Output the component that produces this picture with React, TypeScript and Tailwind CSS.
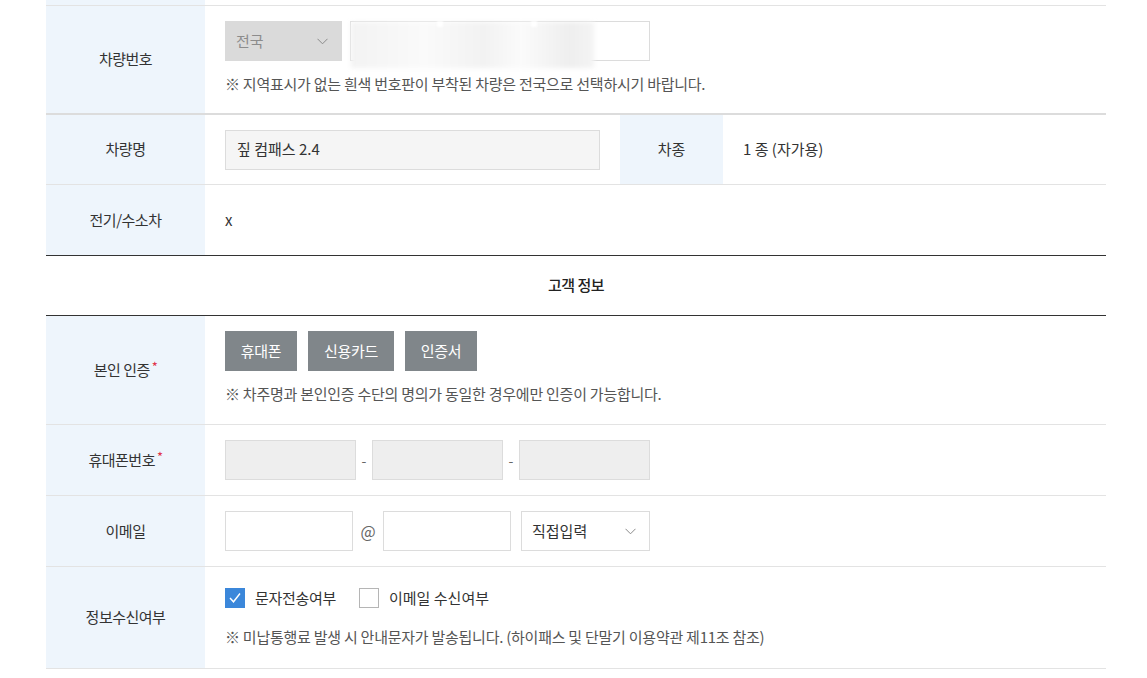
import React from "react";

const font = { fontFamily: '"Noto Sans CJK KR", "Noto Sans", sans-serif' };

function Chevron({ className = "" }: { className?: string }) {
  return (
    <svg width="11" height="7" viewBox="0 0 11 7" className={className}>
      <polyline points="0.5,0.8 5.5,5.8 10.5,0.8" fill="none" stroke="#8a8a8a" strokeWidth="1" />
    </svg>
  );
}

function Label({ children, req = false }: { children: React.ReactNode; req?: boolean }) {
  return (
    <div className="w-[159px] shrink-0 bg-[#eef5fc] flex items-center justify-center text-[15px] text-[#333] tracking-[-0.5px]">
      <span>{children}</span>
      {req && <span className="text-[#e0344a] text-[13px] ml-[2px] -mt-[6px]">*</span>}
    </div>
  );
}

function Note({ children, className = "" }: { children: React.ReactNode; className?: string }) {
  return <div className={"text-[15px] leading-[20px] text-[#555] tracking-[-0.25px] " + className}>{children}</div>;
}

export default function App() {
  return (
    <div className="w-[1147px] h-[678px] bg-white overflow-hidden" style={font}>
      <div className="ml-[46px] w-[1060px]">
        {/* partial row above */}
        <div className="flex h-[6px] border-b border-[#e3e3e3]">
          <div className="w-[159px] bg-[#eef5fc]" />
        </div>

        {/* 차량번호 */}
        <div className="flex h-[109px] border-b-2 border-[#dcdcdc]">
          <Label>차량번호</Label>
          <div className="pl-[20px] pt-[15px]">
            <div className="flex gap-[8px]">
              <div className="w-[117px] h-[40px] bg-[#dadada] flex items-center justify-between pl-[11px] pr-[14px] text-[15px] text-[#8c8c8c]">
                <span>전국</span>
                <Chevron />
              </div>
              <div className="relative w-[300px] h-[40px] border border-[#dcdcdc] bg-white">
                <div className="absolute left-0 top-0 w-[243px] h-[46px] bg-[linear-gradient(90deg,#f3f3f3_0%,#fafafa_30%,#f2f2f2_55%,#fbfbfb_70%,#eeeeee_90%,#f4f4f4_100%)] blur-[2px]" />
                <div className="absolute left-[86px] -top-[1px] w-[6px] h-[6px] bg-white blur-[1px]" />
                <div className="absolute left-[180px] -top-[1px] w-[6px] h-[6px] bg-white blur-[1px]" />
              </div>
            </div>
            <Note className="mt-[13px]">※ 지역표시가 없는 흰색 번호판이 부착된 차량은 전국으로 선택하시기 바랍니다.</Note>
          </div>
        </div>

        {/* 차량명 */}
        <div className="flex h-[70px] border-b border-[#e3e3e3]">
          <Label>차량명</Label>
          <div className="pl-[20px] flex items-center">
            <div className="w-[375px] h-[40px] bg-[#f5f5f5] border border-[#dcdcdc] flex items-center pl-[11px] text-[15px] text-[#333]">
              짚 컴패스 2.4
            </div>
          </div>
          <div className="ml-[20px] w-[103px] bg-[#eef5fc] flex items-center justify-center text-[15px] text-[#333]">차종</div>
          <div className="pl-[20px] flex items-center text-[15px] text-[#333]">1 종 (자가용)</div>
        </div>

        {/* 전기/수소차 */}
        <div className="flex h-[71px] border-b border-[#333]">
          <Label>전기/수소차</Label>
          <div className="pl-[20px] flex items-center text-[15px] text-[#333]">x</div>
        </div>

        {/* 고객 정보 title */}
        <div className="h-[60px] border-b border-[#333] flex items-center justify-center text-[15px] font-medium text-[#222] tracking-[-0.5px]">
          고객 정보
        </div>

        {/* 본인 인증 */}
        <div className="flex h-[109px] border-b border-[#e3e3e3]">
          <Label req>본인 인증</Label>
          <div className="pl-[20px] pt-[15px]">
            <div className="flex gap-[11px]">
              {["휴대폰", "신용카드", "인증서"].map((t, i) => (
                <div
                  key={t}
                  className={
                    "h-[40px] bg-[#80868a] text-white text-[15px] flex items-center justify-center tracking-[-0.3px] " +
                    (i === 1 ? "w-[86px]" : "w-[72px]")
                  }
                >
                  {t}
                </div>
              ))}
            </div>
            <Note className="mt-[13px]">※ 차주명과 본인인증 수단의 명의가 동일한 경우에만 인증이 가능합니다.</Note>
          </div>
        </div>

        {/* 휴대폰번호 */}
        <div className="flex h-[71px] border-b border-[#e3e3e3]">
          <Label req>휴대폰번호</Label>
          <div className="pl-[20px] flex items-center">
            <div className="w-[131px] h-[40px] bg-[#eeeeee] border border-[#dcdcdc]" />
            <span className="w-[16px] text-center text-[14px] text-[#666]">-</span>
            <div className="w-[131px] h-[40px] bg-[#eeeeee] border border-[#dcdcdc]" />
            <span className="w-[16px] text-center text-[14px] text-[#666]">-</span>
            <div className="w-[131px] h-[40px] bg-[#eeeeee] border border-[#dcdcdc]" />
          </div>
        </div>

        {/* 이메일 */}
        <div className="flex h-[71px] border-b border-[#e3e3e3]">
          <Label>이메일</Label>
          <div className="pl-[20px] flex items-center">
            <div className="w-[128px] h-[40px] bg-white border border-[#dcdcdc]" />
            <span className="w-[30px] text-center text-[16px] text-[#666]">@</span>
            <div className="w-[128px] h-[40px] bg-white border border-[#dcdcdc]" />
            <div className="ml-[10px] w-[129px] h-[40px] bg-white border border-[#dcdcdc] flex items-center justify-between pl-[10px] pr-[13px] text-[15px] text-[#333]">
              <span>직접입력</span>
              <Chevron />
            </div>
          </div>
        </div>

        {/* 정보수신여부 */}
        <div className="flex h-[102px] border-b border-[#e3e3e3]">
          <Label>정보수신여부</Label>
          <div className="pl-[20px] pt-[21px]">
            <div className="flex items-center h-[20px] text-[15px] text-[#333]">
              <div className="w-[20px] h-[20px] bg-[#3b87da] flex items-center justify-center">
                <svg width="14" height="12" viewBox="0 0 14 12">
                  <polyline points="2,6 5.5,9.8 12,1.5" fill="none" stroke="#fff" strokeWidth="1.4" />
                </svg>
              </div>
              <span className="ml-[10px] tracking-[-0.3px]">문자전송여부</span>
              <div className="ml-[23px] w-[20px] h-[20px] bg-white border border-[#b5b5b5]" />
              <span className="ml-[10px]">이메일 수신여부</span>
            </div>
            <Note className="mt-[19px]">※ 미납통행료 발생 시 안내문자가 발송됩니다. (하이패스 및 단말기 이용약관 제11조 참조)</Note>
          </div>
        </div>
      </div>
    </div>
  );
}
